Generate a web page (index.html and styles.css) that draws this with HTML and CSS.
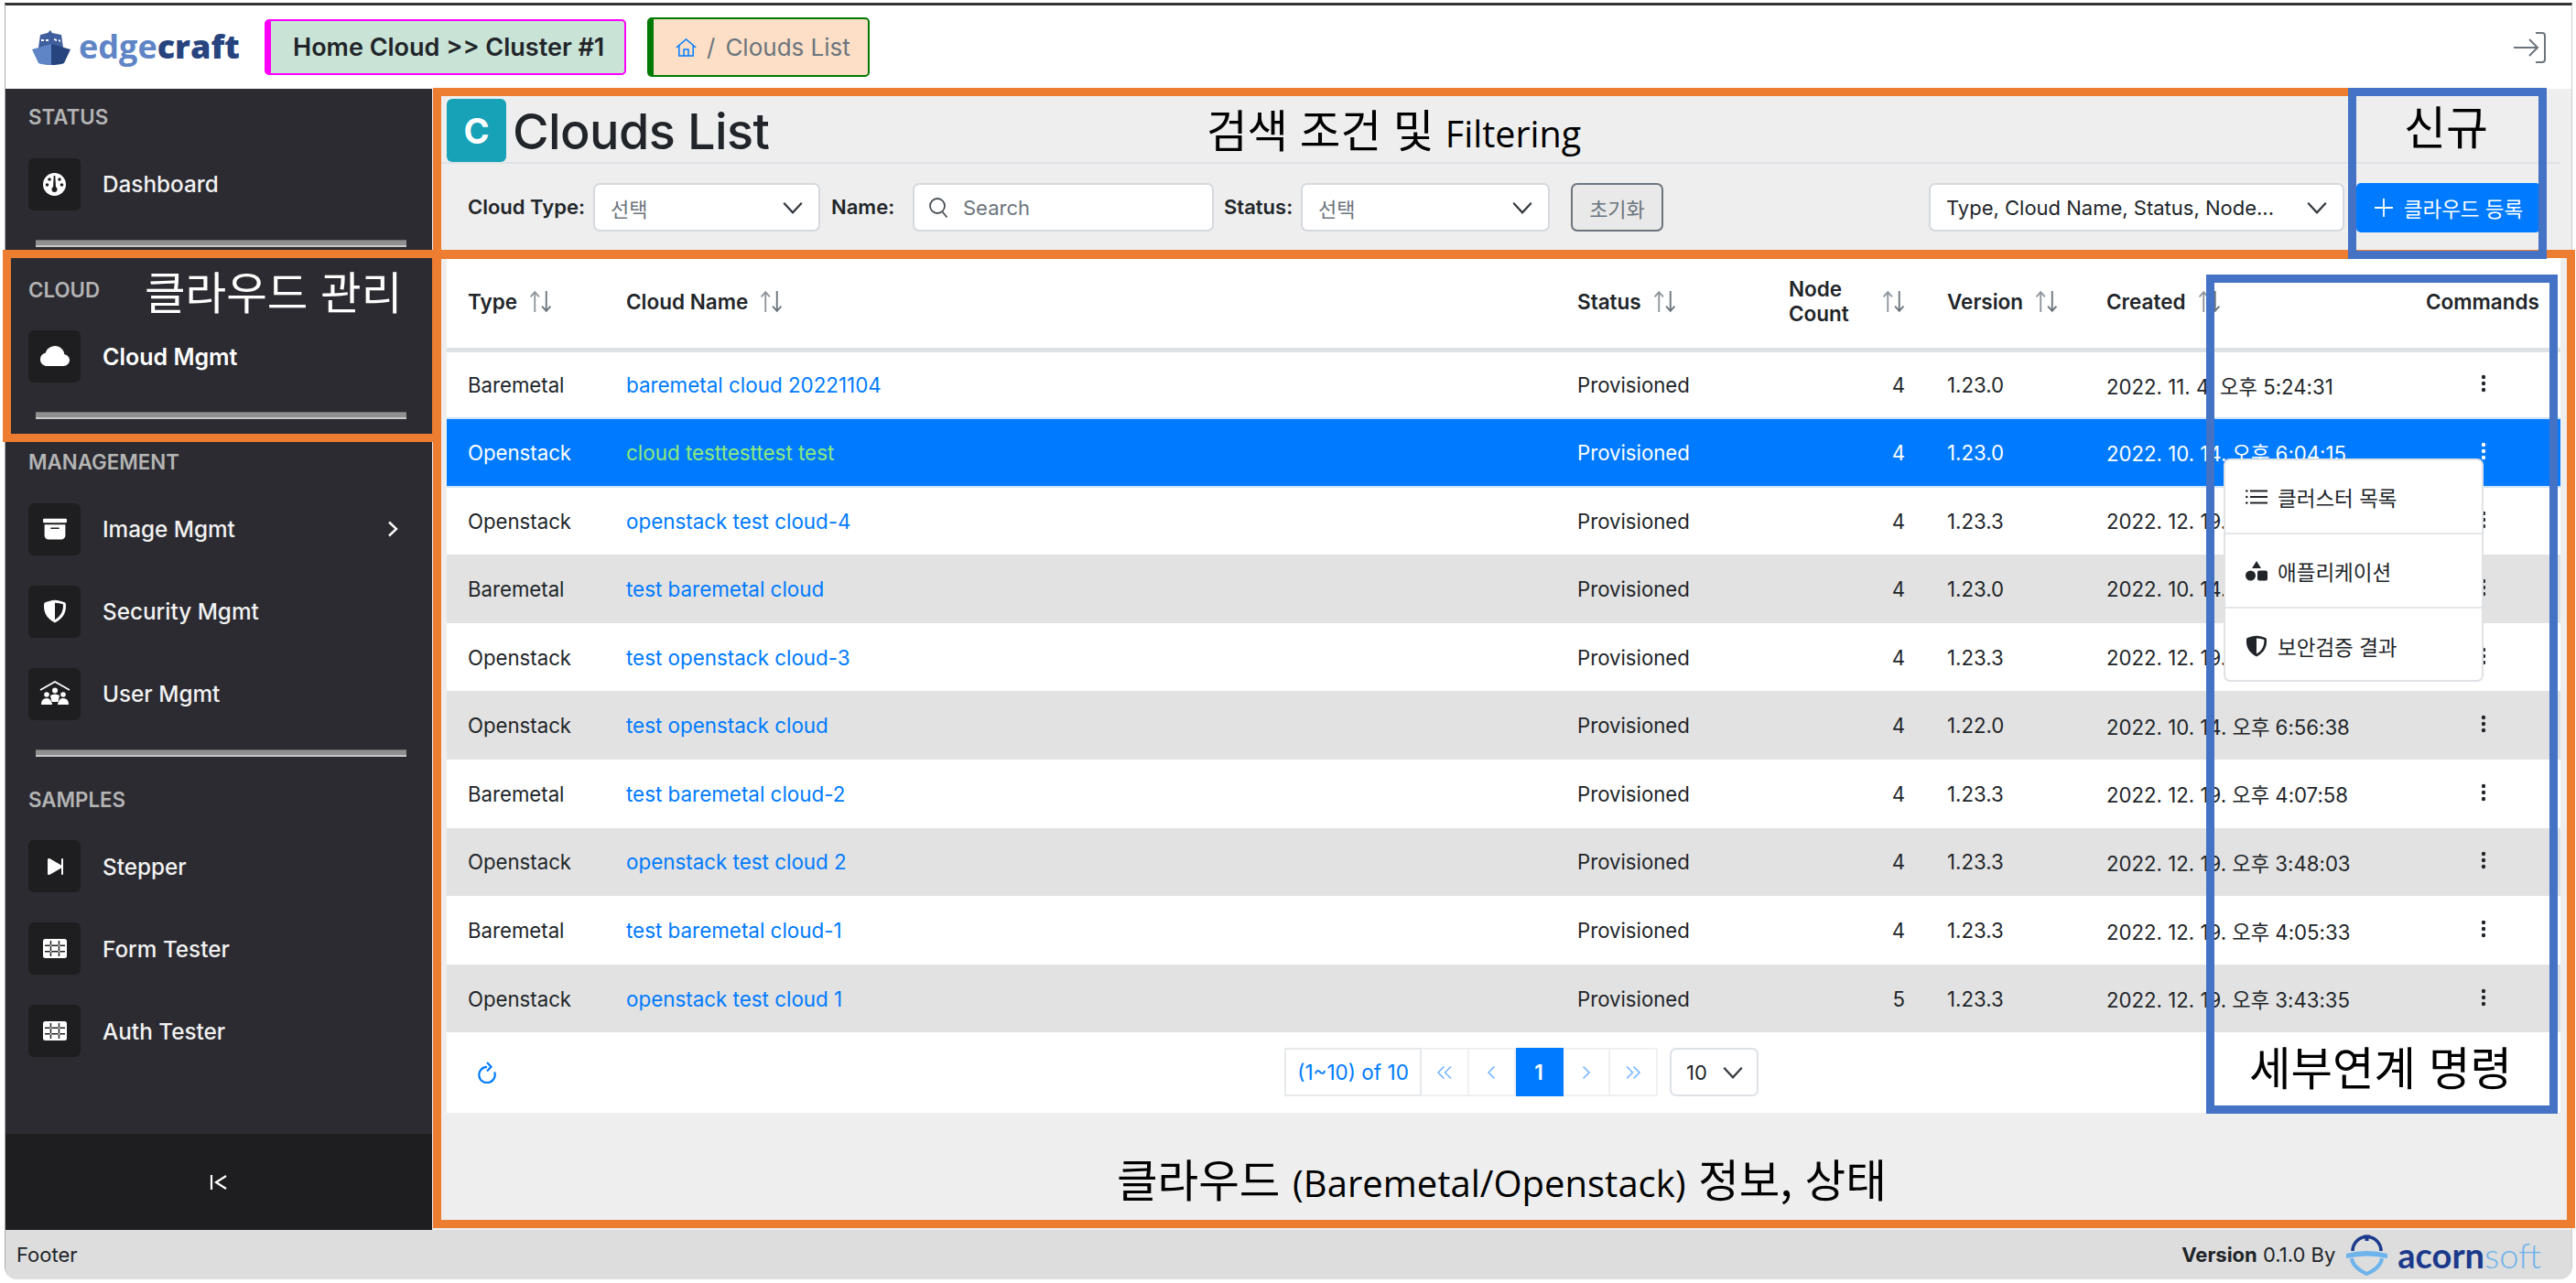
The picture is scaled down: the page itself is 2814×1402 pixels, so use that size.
FILE: index.html
```html
<!DOCTYPE html>
<html lang="ko">
<head>
    <meta charset="UTF-8">
    <meta name="viewport" content="width=device-width, initial-scale=1.0">
    <title>Clouds List</title>
    <link rel="stylesheet" href="styles.css">
</head>
<body>
    <svg class="sprite" width="0" height="0">
        <symbol id="i-sort" viewBox="0 0 24 24">
            <path class="sort-up" d="M6 23V2M1.5 7 6 2l4.500 5"/>
            <path class="sort-down" d="M18 1v21M13.500 17 18 22l4.500-5"/>
        </symbol>
        <symbol id="i-kebab" viewBox="0 0 6 20">
            <circle cx="3" cy="3" r="2.200"/><circle cx="3" cy="10" r="2.200"/><circle cx="3" cy="17" r="2.200"/>
        </symbol>
        <symbol id="i-chevron" viewBox="0 0 16 16">
            <path d="M1.500 4.500 8 11.500l6.500-7" fill="none" stroke="currentColor" stroke-width="1.500"/>
        </symbol>
        <symbol id="i-grid" viewBox="0 0 26 21">
            <path fill-rule="evenodd" d="M2.500 0h21A2.500 2.500 0 0 1 26 2.500v16a2.500 2.500 0 0 1-2.500 2.500h-21A2.500 2.500 0 0 1 0 18.500v-16A2.500 2.500 0 0 1 2.500 0ZM7.700 2v17h1.500V2Zm9 0v17h1.500V2ZM2 6.600v1.500h22V6.600Zm0 6.300v1.500h22v-1.500Z"/>
        </symbol>
    </svg>

    <div class="frame">
        <header class="topbar">
            <a class="logo">
                <svg class="logo-ship" viewBox="0 0 42 38">
                    <path fill="#3f5f9f" d="M7 19 9 5l8-2 3-3 2 3 10 2 2 14Z"/>
                    <path fill="#5f85c6" d="M0 21 21 15v23q-9 0-14-2Z"/>
                    <path fill="#27447f" d="M42 21 21 15v23q9 0 14-2Z"/>
                    <path fill="#fff" d="M10 10h3v2h-3Zm5 0h3v2h-3Zm9-1 3 1v2l-3-1Zm5 1 2 1v2l-2-1Z"/>
                </svg>
                <span class="logo-text">edge<b>craft</b></span>
            </a>
            <div class="cluster-tag">Home Cloud &gt;&gt; Cluster #1</div>
            <div class="crumb-tag">
                <svg class="crumb-home" viewBox="0 0 23 20" fill="none" stroke="#007bff" stroke-width="1.500">
                    <path d="M.8 10 11.500 1l10.700 9M3.800 8v11h15.400V8M9 19v-7h5v7"/>
                </svg>
                <span class="crumb-sep">/</span>
                <span>Clouds List</span>
            </div>
            <svg class="logout" viewBox="0 0 35 34" fill="none" stroke="#6c757d" stroke-width="2">
                <path d="M24 1h7a3 3 0 0 1 3 3v26a3 3 0 0 1-3 3h-7M0 17h26M17 8l9 9-9 9"/>
            </svg>
        </header>

        <div class="main">
            <aside class="sidebar">
                <nav class="nav">
                    <div class="nav-title">STATUS</div>
                    <a class="nav-item">
                        <span class="nav-icon">
                            <svg width="25" height="25" viewBox="0 0 25 25"><circle cx="12.500" cy="12.500" r="12.500" fill="#fff"/><g fill="#1e1e20"><circle cx="7" cy="7" r="1.800"/><circle cx="18" cy="7" r="1.800"/><circle cx="4.500" cy="13" r="1.800"/><circle cx="20.500" cy="13" r="1.800"/><path d="M11.700 3h1.600l.7 13h-3Z"/><circle cx="12.500" cy="18" r="3"/></g></svg>
                        </span>
                        Dashboard
                    </a>
                    <div class="nav-divider"></div>

                    <div class="nav-title">CLOUD</div>
                    <a class="nav-item active">
                        <span class="nav-icon">
                            <svg width="32" height="32" viewBox="0 0 16 16" fill="#fff"><path d="M4.406 3.342A5.530 5.530 0 0 1 8 2c2.690 0 4.923 2 5.166 4.579C14.758 6.804 16 8.137 16 9.773 16 11.569 14.502 13 12.687 13H3.781C1.708 13 0 11.366 0 9.318c0-1.763 1.266-3.223 2.942-3.593.143-.863.698-1.723 1.464-2.383z"/></svg>
                        </span>
                        Cloud Mgmt
                    </a>
                    <div class="nav-divider"></div>

                    <div class="nav-title">MANAGEMENT</div>
                    <a class="nav-item">
                        <span class="nav-icon">
                            <svg width="26" height="26" viewBox="0 0 16 16" fill="#fff"><path d="M12.643 15C13.979 15 15 13.845 15 12.500V5H1v7.500C1 13.845 2.021 15 3.357 15h9.286zM5.500 7h5a.5.5 0 0 1 0 1h-5a.5.5 0 0 1 0-1zM.8 1a.8.8 0 0 0-.8.8V3a.8.8 0 0 0 .8.8h14.400A.8.8 0 0 0 16 3V1.800a.8.8 0 0 0-.8-.8H.8z"/></svg>
                        </span>
                        Image Mgmt
                        <svg class="nav-arrow" viewBox="0 0 12 18" fill="none" stroke="#fff" stroke-width="2.400"><path d="M2 1.500 10 9l-8 7.500"/></svg>
                    </a>
                    <a class="nav-item">
                        <span class="nav-icon">
                            <svg width="26" height="26" viewBox="0 0 16 16" fill="#fff"><path fill-rule="evenodd" d="M8 .5C6 .5 3 1.500 1.500 2 1 2.200.7 2.600.7 3 .2 8 2 12.500 8 15.700 14 12.500 15.800 8 15.300 3c0-.4-.3-.8-.8-1C13 1.500 10 .5 8 .5Zm0 1.800v11.400c4.300-2.600 5.800-6.200 5.500-10.400C12 2.800 9.500 2.200 8 2.300Z"/></svg>
                        </span>
                        Security Mgmt
                    </a>
                    <a class="nav-item">
                        <span class="nav-icon">
                            <svg width="34" height="28" viewBox="0 0 34 28" fill="#fff">
                                <path d="M1 10 17 1l16 9" fill="none" stroke="#fff" stroke-width="1.800"/>
                                <circle cx="17" cy="10.500" r="3"/><circle cx="8" cy="15" r="2.800"/><circle cx="26" cy="15" r="2.800"/>
                                <path d="M12 16q5-3 10 0l-1.500 7h-7ZM2 26q0-7 6-7 4 0 5 4 1 1 1 3ZM32 26q0-7-6-7-4 0-5 4-1 1-1 3Z"/>
                            </svg>
                        </span>
                        User Mgmt
                    </a>
                    <div class="nav-divider"></div>

                    <div class="nav-title">SAMPLES</div>
                    <a class="nav-item">
                        <span class="nav-icon">
                            <svg width="32" height="32" viewBox="0 0 16 16" fill="#fff"><path d="M12.500 4a.5.5 0 0 0-1 0v3.248L5.233 3.612C4.713 3.310 4 3.655 4 4.308v7.384c0 .653.713.998 1.233.696L11.500 8.752V12a.5.5 0 0 0 1 0V4z"/></svg>
                        </span>
                        Stepper
                    </a>
                    <a class="nav-item">
                        <span class="nav-icon"><svg class="grid-icon"><use href="#i-grid"/></svg></span>
                        Form Tester
                    </a>
                    <a class="nav-item">
                        <span class="nav-icon"><svg class="grid-icon"><use href="#i-grid"/></svg></span>
                        Auth Tester
                    </a>
                </nav>
                <div class="sidebar-toggle">
                    <svg width="20" height="18" viewBox="0 0 20 18" fill="none" stroke="#fff" stroke-width="2.200"><path d="M2 1v16M18 2 7 9l11 7"/></svg>
                </div>
            </aside>

            <main class="content">
                <div class="title-row">
                    <span class="title-badge">C</span>
                    <h1 class="page-title">Clouds List</h1>
                </div>

                <div class="filter-row">
                    <label class="filter-label label-type">Cloud Type:</label>
                    <div class="select select-type">
                        <span class="placeholder">선택</span>
                        <svg class="chevron"><use href="#i-chevron"/></svg>
                    </div>
                    <label class="filter-label label-name">Name:</label>
                    <div class="search">
                        <svg width="22" height="24" viewBox="0 0 22 24" fill="none" stroke="#495057" stroke-width="1.800"><circle cx="10" cy="10" r="8"/><path d="m15.500 16.500 5 6"/></svg>
                        <input type="text" placeholder="Search">
                    </div>
                    <label class="filter-label label-status">Status:</label>
                    <div class="select select-status">
                        <span class="placeholder">선택</span>
                        <svg class="chevron"><use href="#i-chevron"/></svg>
                    </div>
                    <button class="btn-reset">초기화</button>
                    <div class="select select-columns">
                        <span>Type, Cloud Name, Status, Node...</span>
                        <svg class="chevron"><use href="#i-chevron"/></svg>
                    </div>
                    <button class="btn-new">
                        <svg width="22" height="22" viewBox="0 0 22 22" stroke="#fff" stroke-width="1.800"><path d="M11 1v20M1 11h20"/></svg>
                        클라우드 등록
                    </button>
                </div>

                <section class="panel">
                    <table class="cloud-table">
                        <colgroup>
                            <col class="col-type"><col class="col-name"><col class="col-status"><col class="col-node"><col class="col-version"><col class="col-created"><col class="col-cmd">
                        </colgroup>
                        <thead>
                            <tr>
                                <th><span class="th-in">Type <svg class="sort"><use href="#i-sort"/></svg></span></th>
                                <th><span class="th-in">Cloud Name <svg class="sort"><use href="#i-sort"/></svg></span></th>
                                <th><span class="th-in">Status <svg class="sort"><use href="#i-sort"/></svg></span></th>
                                <th><span class="th-in th-node"><span>Node<br>Count</span> <svg class="sort"><use href="#i-sort"/></svg></span></th>
                                <th><span class="th-in">Version <svg class="sort"><use href="#i-sort"/></svg></span></th>
                                <th><span class="th-in">Created <svg class="sort"><use href="#i-sort"/></svg></span></th>
                                <th class="th-cmd">Commands</th>
                            </tr>
                        </thead>
                        <tbody>
                            <tr>
                                <td>Baremetal</td><td><a>baremetal cloud 20221104</a></td><td>Provisioned</td><td class="num">4</td><td>1.23.0</td><td>2022. 11. 4. 오후 5:24:31</td>
                                <td class="cmd"><svg class="kebab"><use href="#i-kebab"/></svg></td>
                            </tr>
                            <tr class="selected">
                                <td>Openstack</td><td><a>cloud testtesttest test</a></td><td>Provisioned</td><td class="num">4</td><td>1.23.0</td><td>2022. 10. 14. 오후 6:04:15</td>
                                <td class="cmd"><svg class="kebab"><use href="#i-kebab"/></svg></td>
                            </tr>
                            <tr>
                                <td>Openstack</td><td><a>openstack test cloud-4</a></td><td>Provisioned</td><td class="num">4</td><td>1.23.3</td><td>2022. 12. 19.</td>
                                <td class="cmd"><svg class="kebab"><use href="#i-kebab"/></svg></td>
                            </tr>
                            <tr class="stripe">
                                <td>Baremetal</td><td><a>test baremetal cloud</a></td><td>Provisioned</td><td class="num">4</td><td>1.23.0</td><td>2022. 10. 14.</td>
                                <td class="cmd"><svg class="kebab"><use href="#i-kebab"/></svg></td>
                            </tr>
                            <tr>
                                <td>Openstack</td><td><a>test openstack cloud-3</a></td><td>Provisioned</td><td class="num">4</td><td>1.23.3</td><td>2022. 12. 19.</td>
                                <td class="cmd"><svg class="kebab"><use href="#i-kebab"/></svg></td>
                            </tr>
                            <tr class="stripe">
                                <td>Openstack</td><td><a>test openstack cloud</a></td><td>Provisioned</td><td class="num">4</td><td>1.22.0</td><td>2022. 10. 14. 오후 6:56:38</td>
                                <td class="cmd"><svg class="kebab"><use href="#i-kebab"/></svg></td>
                            </tr>
                            <tr>
                                <td>Baremetal</td><td><a>test baremetal cloud-2</a></td><td>Provisioned</td><td class="num">4</td><td>1.23.3</td><td>2022. 12. 19. 오후 4:07:58</td>
                                <td class="cmd"><svg class="kebab"><use href="#i-kebab"/></svg></td>
                            </tr>
                            <tr class="stripe">
                                <td>Openstack</td><td><a>openstack test cloud 2</a></td><td>Provisioned</td><td class="num">4</td><td>1.23.3</td><td>2022. 12. 19. 오후 3:48:03</td>
                                <td class="cmd"><svg class="kebab"><use href="#i-kebab"/></svg></td>
                            </tr>
                            <tr>
                                <td>Baremetal</td><td><a>test baremetal cloud-1</a></td><td>Provisioned</td><td class="num">4</td><td>1.23.3</td><td>2022. 12. 19. 오후 4:05:33</td>
                                <td class="cmd"><svg class="kebab"><use href="#i-kebab"/></svg></td>
                            </tr>
                            <tr class="stripe">
                                <td>Openstack</td><td><a>openstack test cloud 1</a></td><td>Provisioned</td><td class="num">5</td><td>1.23.3</td><td>2022. 12. 19. 오후 3:43:35</td>
                                <td class="cmd"><svg class="kebab"><use href="#i-kebab"/></svg></td>
                            </tr>
                        </tbody>
                    </table>

                    <div class="pager-row">
                        <svg class="refresh" viewBox="0 0 20 24" fill="none" stroke="#007bff" stroke-width="2.200">
                            <path d="M10 5.800a8.700 8.700 0 1 0 8.200 5.700M10 1l4.500 4.800-4.500 4.700"/>
                        </svg>
                        <div class="pager">
                            <span class="page-range">(1~10) of 10</span>
                            <span class="page-btn faded">
                                <svg width="18" height="16" viewBox="0 0 18 16" fill="none" stroke="currentColor" stroke-width="1.500"><path d="M8.500 1.500 2 8l6.500 6.500M16 1.500 9.500 8l6.500 6.500"/></svg>
                            </span>
                            <span class="page-btn faded">
                                <svg width="10" height="16" viewBox="0 0 10 16" fill="none" stroke="currentColor" stroke-width="1.500"><path d="M8.500 1.500 2 8l6.500 6.500"/></svg>
                            </span>
                            <span class="page-btn current">1</span>
                            <span class="page-btn faded">
                                <svg width="10" height="16" viewBox="0 0 10 16" fill="none" stroke="currentColor" stroke-width="1.500"><path d="M1.500 1.500 8 8l-6.500 6.500"/></svg>
                            </span>
                            <span class="page-btn faded">
                                <svg width="18" height="16" viewBox="0 0 18 16" fill="none" stroke="currentColor" stroke-width="1.500"><path d="M2 1.500 8.500 8 2 14.500M9.500 1.500 16 8l-6.500 6.500"/></svg>
                            </span>
                        </div>
                        <div class="select select-size">
                            <span>10</span>
                            <svg class="chevron"><use href="#i-chevron"/></svg>
                        </div>
                    </div>
                </section>
            </main>
        </div>

        <footer class="footer">
            <span>Footer</span>
            <div class="footer-right">
                <span><b>Version</b> 0.1.0 By</span>
                <svg class="acorn" viewBox="0 0 45 45" fill="none">
                    <path d="M7 18a15.500 15.500 0 0 1 31 0" stroke="#1b3a8c" stroke-width="3.500"/>
                    <path d="M22.500 3v4" stroke="#1b3a8c" stroke-width="4"/>
                    <path d="M19 2h7" stroke="#1b3a8c" stroke-width="3"/>
                    <path d="M0 21q22-6 45 0v5q-22-5-45 0Z" fill="#6db3ec"/>
                    <path d="M6 26q1 10 16.500 17Q38 36 39 26" stroke="#6db3ec" stroke-width="4"/>
                </svg>
                <span class="acorn-text">acorn<i>soft</i></span>
            </div>
        </footer>
    </div>

    <!-- row command menu -->
    <div class="row-menu">
        <div class="row-menu-item">
            <svg width="24" height="20" viewBox="0 0 24 20" fill="#212529"><path d="M5 2.500h19v2H5Zm0 6.500h19v2H5Zm0 6.500h19v2H5Z"/><circle cx="1.300" cy="3.500" r="1.300"/><circle cx="1.300" cy="10" r="1.300"/><circle cx="1.300" cy="16.500" r="1.300"/></svg>
            클러스터 목록
        </div>
        <div class="row-menu-item">
            <svg width="24" height="22" viewBox="0 0 24 22" fill="#212529"><path d="M12 0l5 8H7Z"/><circle cx="5.500" cy="16" r="5.500"/><rect x="13" y="10.500" width="11" height="11" rx="2"/></svg>
            애플리케이션
        </div>
        <div class="row-menu-item">
            <svg width="24" height="24" viewBox="0 0 16 16" fill="#212529"><path fill-rule="evenodd" d="M8 .5C6 .5 3 1.500 1.500 2 1 2.200.7 2.600.7 3 .2 8 2 12.500 8 15.700 14 12.500 15.800 8 15.300 3c0-.4-.3-.8-.8-1C13 1.500 10 .5 8 .5Zm0 1.800v11.400c4.300-2.600 5.800-6.200 5.500-10.400C12 2.800 9.500 2.200 8 2.300Z"/></svg>
            보안검증 결과
        </div>
    </div>

    <!-- review marks drawn over the screen -->
    <div class="mark orange mark-title"></div>
    <div class="mark orange mark-body"></div>
    <div class="mark orange mark-cloud"></div>
    <div class="mark blue mark-new"></div>
    <div class="mark blue mark-cmd"></div>

    <div class="note note-white note-cloud">클라우드 관리</div>
    <div class="note note-search">검색 조건 및 <span class="note-latin">Filtering</span></div>
    <div class="note note-new">신규</div>
    <div class="note note-cmd">세부연계 명령</div>
    <div class="note note-info">클라우드 <span class="note-latin">(Baremetal/Openstack)</span> 정보, 상태</div>
</body>
</html>
```

FILE: styles.css
```css
* {
    box-sizing: border-box;
}
body {
    margin: 0;
    position: relative;
    width: 2814px;
    height: 1402px;
    overflow: hidden;
    background: #fff;
    font-family: Inter, "Noto Sans CJK KR", sans-serif;
    font-size: 22px;
    color: #212529;
}
.sprite {
    position: absolute;
}
.frame {
    margin: 3px 0 0 5px;
    width: 2805px;
    height: 1395px;
    border-top: 3px solid #333;
    border-left: 1px solid #aaa;
    border-right: 1px solid #ccc;
    border-radius: 0 0 14px 14px;
    overflow: hidden;
    display: flex;
    flex-direction: column;
}

/* top bar */
.topbar {
    height: 91px;
    flex: none;
    display: flex;
    align-items: center;
    padding: 0 28px 0 29px;
    background: #fff;
}
.logo {
    width: 254px;
    display: flex;
    align-items: center;
    gap: 9px;
}
.logo-ship {
    width: 42px;
    height: 38px;
}
.logo-text {
    font-family: "Open Sans", sans-serif;
    font-weight: 700;
    font-size: 36px;
    color: #5f85c6;
    line-height: 1;
    margin-top: -2px;
}
.logo-text b {
    color: #27447f;
}
.cluster-tag {
    width: 395px;
    height: 61px;
    margin-right: 23px;
    display: flex;
    align-items: center;
    padding-left: 24px;
    background: #c9e3d7;
    border: 2px solid #f0f;
    border-left-width: 7px;
    border-radius: 5px;
    font-size: 27px;
    font-weight: 600;
}
.crumb-tag {
    width: 243px;
    height: 65px;
    display: flex;
    align-items: center;
    padding-left: 24px;
    background: #fcdfc6;
    border: 2px solid #007a00;
    border-left-width: 7px;
    border-radius: 5px;
    font-size: 26px;
    color: #6c757d;
}
.crumb-home {
    width: 23px;
    height: 20px;
}
.crumb-sep {
    margin: 0 11px;
}
.logout {
    width: 35px;
    height: 34px;
    margin-left: auto;
}

.main {
    flex: 1;
    display: flex;
    min-height: 0;
}

/* sidebar */
.sidebar {
    width: 466px;
    flex: none;
    display: flex;
    flex-direction: column;
    background: #2b2b31;
}
.nav {
    flex: 1;
    padding: 10px 28px 0 25px;
}
.nav-title {
    height: 40px;
    line-height: 42px;
    margin-bottom: 25.5px;
    font-size: 22.3px;
    font-weight: 600;
    color: #b4b4b4;
}
.nav-item {
    height: 57px;
    margin-bottom: 33px;
    display: flex;
    align-items: center;
    gap: 24px;
    font-size: 24.3px;
    font-weight: 500;
    color: #f2f2f2;
}
.nav-item.active {
    font-size: 25px;
    font-weight: 600;
    color: #fff;
}
.nav-icon {
    width: 57px;
    height: 57px;
    flex: none;
    display: flex;
    align-items: center;
    justify-content: center;
    background: #1e1e20;
    border-radius: 6px;
}
.grid-icon {
    width: 26px;
    height: 21px;
    fill: #fff;
}
.nav-arrow {
    width: 12px;
    height: 18px;
    margin-left: auto;
    margin-right: 9px;
}
.nav-divider {
    height: 8px;
    margin: 0 0 26px 8px;
    background: #8f8f8f;
    border-top: 1px solid #6f6f6f;
    border-bottom: 2px solid #c8c8c8;
}
.nav-item + .nav-divider {
    margin-top: -1px;
}
.sidebar-toggle {
    height: 105px;
    flex: none;
    display: flex;
    align-items: center;
    justify-content: center;
    background: #1e1e20;
}

/* content */
.content {
    flex: 1;
    min-width: 0;
    background: #eee;
}
.title-row {
    height: 82px;
    padding: 11px 0 0 16px;
    display: flex;
    align-items: flex-start;
    gap: 7px;
    border-bottom: 2px solid #dee2e6;
    margin-right: 12px;
}
.title-badge {
    width: 65px;
    height: 69px;
    display: flex;
    align-items: center;
    justify-content: center;
    background: #17a2b8;
    border-radius: 6px;
    color: #fff;
    font-size: 38px;
    font-weight: 700;
}
.page-title {
    margin: 0;
    font-size: 54px;
    font-weight: 500;
    line-height: 72px;
    letter-spacing: -0.6px;
}
.filter-row {
    height: 97px;
    padding: 21px 34px 0 39px;
    display: flex;
    align-items: flex-start;
}
.filter-label {
    height: 53px;
    line-height: 53px;
    font-size: 22px;
    font-weight: 600;
    white-space: nowrap;
}
.label-type {
    width: 137px;
}
.label-name {
    width: 89px;
    margin-left: 12px;
}
.label-status {
    width: 84px;
    margin-left: 11px;
}
.select {
    height: 53px;
    display: flex;
    align-items: center;
    justify-content: space-between;
    padding: 0 16px 0 17px;
    background: #fff;
    border: 2px solid #d5d9de;
    border-radius: 7px;
    font-size: 22px;
}
.placeholder {
    color: #6c757d;
}
.chevron {
    width: 24px;
    height: 24px;
    color: #343a40;
}
.select-type {
    width: 248px;
}
.select-status {
    width: 272px;
}
.select-columns {
    width: 454px;
    margin-left: auto;
}
.select-size {
    width: 97px;
    margin-left: 13px;
    padding: 0 14px 0 16px;
    border-color: #dee2e6;
}
.search {
    width: 329px;
    height: 53px;
    display: flex;
    align-items: center;
    gap: 14px;
    padding-left: 15px;
    background: #fff;
    border: 2px solid #d5d9de;
    border-radius: 7px;
}
.search input {
    flex: 1;
    min-width: 0;
    border: none;
    outline: none;
    padding-left: 2px;
    font-family: inherit;
    font-size: 22px;
}
.search input::placeholder {
    color: #6c757d;
}
.btn-reset {
    width: 101px;
    height: 53px;
    margin-left: 23px;
    background: #e9e9e9;
    border: 2px solid #6c757d;
    border-radius: 7px;
    font-family: inherit;
    font-size: 22px;
    color: #6c757d;
}
.btn-new {
    width: 201px;
    height: 54px;
    margin-left: 13px;
    display: flex;
    align-items: center;
    justify-content: center;
    gap: 11px;
    background: #007bff;
    border: none;
    border-radius: 5px;
    font-family: inherit;
    font-size: 22.5px;
    color: #fff;
}

/* table */
.panel {
    margin: 0 12px 0 16px;
    background: #fff;
}
.cloud-table {
    width: 100%;
    table-layout: fixed;
    border-collapse: collapse;
}
.col-type { width: 173px; }
.col-name { width: 1039px; }
.col-status { width: 231px; }
.col-node { width: 173px; }
.col-version { width: 174px; }
.col-created { width: 349px; }
.col-cmd { width: 170px; }

th {
    height: 106.5px;
    padding: 2px 23px 0;
    text-align: left;
    font-size: 22.5px;
    font-weight: 600;
    line-height: 27px;
    border-bottom: 5px solid #dee2e6;
}
.th-in {
    display: flex;
    align-items: center;
    gap: 13px;
}
.th-node {
    justify-content: space-between;
}
.th-cmd {
    text-align: right;
    padding-right: 24px;
}
.sort {
    width: 25px;
    height: 25px;
    flex: none;
    fill: none;
    stroke-width: 1.800;
}
.sort-up {
    stroke: #8f969c;
}
.sort-down {
    stroke: #6c757d;
}
td {
    height: 74.6px;
    padding: 0 23px;
    font-size: 22.2px;
    white-space: nowrap;
}
td a {
    font-size: 22.4px;
    color: #007bff;
}
.num {
    text-align: right;
}
.cmd {
    text-align: center;
    padding-left: 24px;
    padding-right: 22px;
}
.kebab {
    width: 6px;
    height: 20px;
    display: block;
    margin: -3px auto 0;
    fill: #212529;
}
.stripe {
    background: #e2e2e2;
}
.selected {
    background: #007bff;
    color: #fff;
}
.selected td {
    border-top: 2px solid #cfe2f8;
    border-bottom: 2px solid #cfe2f8;
}
.selected a {
    color: #8eea7c;
}
.selected .kebab {
    fill: #fff;
}

.pager-row {
    height: 88px;
    padding: 17px 876px 0 34px;
    display: flex;
    align-items: flex-start;
}
.refresh {
    width: 20px;
    height: 24px;
    margin-top: 15px;
    margin-right: auto;
}
.pager {
    height: 53px;
    display: flex;
    font-size: 22.5px;
    color: #007bff;
}
.page-range {
    width: 150px;
    display: flex;
    align-items: center;
    justify-content: center;
    border: 2px solid #e6e9ec;
}
.page-btn {
    width: 51.6px;
    display: flex;
    align-items: center;
    justify-content: center;
    border: 2px solid #eef0f2;
    border-left: none;
}
.faded {
    color: #6fb3ff;
}
.current {
    background: #007bff;
    border-color: #007bff;
    color: #fff;
    font-weight: 600;
}

/* footer */
.footer {
    height: 54px;
    flex: none;
    display: flex;
    align-items: center;
    justify-content: space-between;
    padding: 0 33px 0 12px;
    background: #ddd;
    font-size: 22px;
}
.footer-right {
    display: flex;
    align-items: center;
}
.footer-right b {
    font-weight: 700;
}
.acorn {
    width: 45px;
    height: 45px;
    margin: 0 11px 0 12px;
}
.acorn-text {
    font-family: Lato, sans-serif;
    font-size: 38px;
    font-weight: 700;
    color: #1b3a8c;
    line-height: 1;
}
.acorn-text i {
    font-style: normal;
    font-weight: 300;
    color: #6db3ec;
}

/* menu over the table */
.row-menu {
    position: absolute;
    left: 2429px;
    top: 501px;
    width: 284px;
    height: 244px;
    background: #fff;
    border: 2px solid #dfe2e5;
    border-radius: 7px;
}
.row-menu-item {
    height: 81px;
    display: flex;
    align-items: center;
    gap: 11px;
    padding-left: 22px;
    font-size: 22.5px;
    border-bottom: 2px solid #e4e7ea;
}
.row-menu-item:last-child {
    border-bottom: none;
}

/* review marks */
.mark {
    position: absolute;
    border-style: solid;
    border-width: 9px;
}
.orange {
    border-color: #ed7d31;
}
.blue {
    border-color: #4472c4;
}
.mark-title {
    left: 473px;
    top: 96px;
    width: 2309px;
    height: 187px;
}
.mark-body {
    left: 473px;
    top: 273px;
    width: 2340px;
    height: 1069px;
}
.mark-cloud {
    left: 3px;
    top: 273px;
    width: 478px;
    height: 210px;
}
.mark-new {
    left: 2565px;
    top: 96px;
    width: 217px;
    height: 187px;
}
.mark-cmd {
    left: 2410px;
    top: 300px;
    width: 384px;
    height: 917px;
}
.note {
    position: absolute;
    font-family: "Noto Sans CJK KR", sans-serif;
    font-size: 48.5px;
    line-height: 60px;
    color: #000;
    white-space: nowrap;
}
.note-latin {
    font-family: "Open Sans", sans-serif;
    font-size: 40px;
}
.note-white {
    color: #fff;
}
.note-cloud {
    left: 158px;
    top: 287px;
}
.note-search {
    left: 1318px;
    top: 110px;
    word-spacing: -1px;
}
.note-search .note-latin {
    font-size: 39.5px;
}
.note-new {
    left: 2626px;
    top: 106px;
    font-size: 50px;
}
.note-cmd {
    left: 2457px;
    top: 1135px;
    font-size: 49.5px;
}
.note-info {
    left: 1220px;
    top: 1257px;
}
```
